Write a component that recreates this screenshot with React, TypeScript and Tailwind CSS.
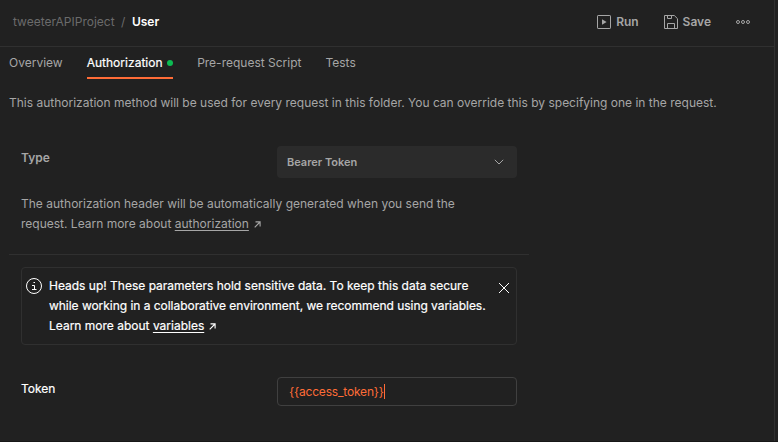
import type { ReactNode } from "react";

function RunIcon() {
  return (
    <svg width="14" height="14" viewBox="0 0 14 14" fill="none">
      <rect x="0.5" y="0.5" width="13" height="13" rx="0.6" stroke="#a6a6a6" />
      <path d="M5 4.2 9.6 7 5 9.8Z" fill="#a6a6a6" />
    </svg>
  );
}

function SaveIcon() {
  return (
    <svg width="14" height="14" viewBox="0 0 14 14" fill="none" stroke="#a6a6a6">
      <path d="M0.5 0.5H10.3L13.5 3.7V13.5H0.5Z" strokeLinejoin="round" />
      <path d="M3.5 0.5V3.5H7.5V0.5M3.5 13.5V8.5H10.5V13.5" />
    </svg>
  );
}

function MoreIcon() {
  return (
    <svg width="14" height="4" viewBox="0 0 14 4" fill="none" stroke="#a6a6a6">
      <circle cx="2" cy="2" r="1.5" />
      <circle cx="7" cy="2" r="1.5" />
      <circle cx="12" cy="2" r="1.5" />
    </svg>
  );
}

function ArrowIcon() {
  return (
    <svg className="ml-[5px] inline-block align-[0px]" width="7" height="7" viewBox="0 0 7 7" fill="none" stroke="currentColor">
      <path d="M1.5 0.9H6.1V5.5M6 1 0.7 6.3" strokeWidth="1.1" />
    </svg>
  );
}

function Link({ children }: { children: ReactNode }) {
  return (
    <>
      <a className="underline decoration-1 underline-offset-2 [text-decoration-skip-ink:none]">{children}</a>
      <ArrowIcon />
    </>
  );
}

export default function App() {
  return (
    <div className="flex h-[442px] w-[778px] overflow-hidden border-b border-[#171717] bg-[#212121] font-['Inter',sans-serif] text-[12px] leading-5 text-[#a6a6a6]">
      <main className="flex w-[775px] flex-col border-r border-[#303030]">
        <header className="flex h-[47px] shrink-0 items-center border-b border-[#303030] pb-[3px] pl-[13px] pr-6">
          <span className="text-[#6b6b6b]">tweeterAPIProject</span>
          <span className="ml-[6.5px] text-[#6b6b6b]">/</span>
          <span className="ml-[6.5px] font-semibold text-white">User</span>
          <div className="ml-auto flex items-center font-semibold">
            <RunIcon />
            <span className="ml-[5px] tracking-[-0.1px]">Run</span>
            <span className="ml-[25px]"><SaveIcon /></span>
            <span className="ml-[5px]">Save</span>
            <span className="ml-[25px]"><MoreIcon /></span>
          </div>
        </header>

        <nav className="flex h-8 shrink-0 gap-6 pl-[9px] pt-[6px]">
          <span>Overview</span>
          <span className="flex w-[86.5px] justify-between border-b-2 border-[#ff6c37] text-white">
            <span className="tracking-[0.02px] [-webkit-text-stroke:0.2px_white]">Authorization</span>
            <i className="mt-[7px] size-1.5 rounded-full bg-[#0cbb52]" />
          </span>
          <span>Pre-request Script</span>
          <span>Tests</span>
        </nav>

        <p className="mt-[14px] pl-[9px] whitespace-nowrap">
          This authorization method will be used for every request in this folder. You can override this by specifying one in the request.
        </p>

        <section className="ml-[9px] mt-[33px] h-[109px] w-[520px] shrink-0 border-b border-[#303030] pl-3">
          <div className="flex">
            <label className="mt-[2px] w-64 font-semibold">Type</label>
            <div className="flex h-8 w-60 items-center justify-between rounded bg-[#2b2b2b] pl-[10px] pr-[13px] text-[11px] font-semibold">
              Bearer Token
              <svg width="10" height="6" viewBox="0 0 10 6" fill="none" stroke="#a6a6a6">
                <path d="m0.8 0.8 4.2 4.2 4.2-4.2" />
              </svg>
            </div>
          </div>
          <p className="mt-4 whitespace-nowrap">
            <span className="tracking-[0.01px]">The authorization header will be automatically generated when you send the</span><br />
            request. Learn more about <Link>authorization</Link>
          </p>
        </section>

        <aside className="ml-[21px] mt-3 flex h-[78px] w-[496px] shrink-0 rounded border border-[#303030] pl-1 pt-2 text-white">
          <svg className="mt-[2px] shrink-0" width="16" height="16" viewBox="0 0 16 16" fill="none" stroke="white">
            <circle cx="8" cy="8" r="7.5" />
            <path d="M6 7.5H8.5V11.5M6 11.5H10.5M7.5 4.5H9" />
          </svg>
          <p className="ml-[7px] w-[440px] whitespace-nowrap [-webkit-text-stroke:0.2px_white]">
            Heads up! These parameters hold sensitive data. To keep this data secure<br />
            <span className="tracking-[-0.035px]">while working in a collaborative environment, we recommend using variables.</span><br />
            Learn more about <Link>variables</Link>
          </p>
          <svg className="ml-[9px] mt-[6px]" width="12" height="12" viewBox="0 0 12 12" fill="none" stroke="white">
            <path d="m1 1 10 10M11 1 1 11" />
          </svg>
        </aside>

        <div className="ml-[21px] mt-8 flex">
          <label className="mt-[2px] w-64 text-white [-webkit-text-stroke:0.2px_white]">Token</label>
          <div className="flex h-[29px] w-60 items-center rounded border border-[#404040] pl-[11px] tracking-[-0.17px] text-[#ff6c37]">
            {"{{access_token}}"}
            <i className="h-[15px] w-px bg-[#ff6c37]" />
          </div>
        </div>
      </main>
    </div>
  );
}
